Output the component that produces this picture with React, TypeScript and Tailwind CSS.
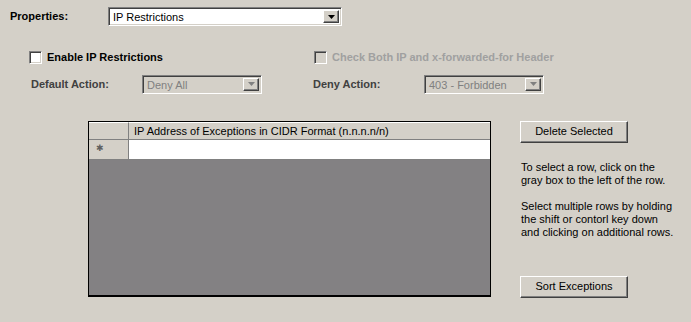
import type { JSX } from "react";

const sunken =
  "border border-t-[#808080] border-l-[#808080] border-b-white border-r-white shadow-[inset_1px_1px_0_#404040,inset_-1px_-1px_0_#d4d0c8]";
const raised =
  "border border-t-white border-l-white border-b-[#404040] border-r-[#404040] shadow-[inset_-1px_-1px_0_#808080]";

function Arrow({ disabled }: { disabled?: boolean }): JSX.Element {
  return (
    <div className={`w-[16px] h-full bg-[#d4d0c8] flex items-center justify-center ${raised}`}>
      <svg width="7" height="4" viewBox="0 0 7 4">
        <path d="M0 0h7L3.5 4z" fill={disabled ? "#808080" : "#000"} />
      </svg>
    </div>
  );
}

function Select({ value, width, disabled }: { value: string; width: string; disabled?: boolean }): JSX.Element {
  return (
    <div className={`${width} h-[19px] flex items-stretch p-[2px] ${sunken} ${disabled ? "bg-[#d4d0c8]" : "bg-white"}`}>
      <div className={`flex-1 pl-[2px] text-[11px] leading-[15px] ${disabled ? "text-[#808080]" : "text-black"}`}>{value}</div>
      <Arrow disabled={disabled} />
    </div>
  );
}

function Checkbox({ label, disabled }: { label: string; disabled?: boolean }): JSX.Element {
  return (
    <div className="flex items-center gap-[5px]">
      <div className={`w-[13px] h-[13px] ${sunken} ${disabled ? "bg-[#d4d0c8]" : "bg-white"}`} />
      <span className={`text-[11px] font-bold ${disabled ? "text-[#a0a0a0]" : "text-black"}`}>{label}</span>
    </div>
  );
}

function Button({ label }: { label: string }): JSX.Element {
  return (
    <div className={`w-[108px] h-[22px] bg-[#d4d0c8] flex items-center justify-center text-[11px] text-black ${raised}`}>
      {label}
    </div>
  );
}

function App(): JSX.Element {
  return (
    <div className="w-[691px] h-[322px] bg-[#d4d0c8] overflow-hidden font-['Liberation_Sans',Arial,sans-serif] text-black">
      <div className="flex items-center pt-[7px]">
        <span className="w-[108px] pl-[10px] text-[11px] font-bold">Properties:</span>
        <Select value="IP Restrictions" width="w-[234px]" />
      </div>

      <div className="flex mt-[23px]">
        <div className="w-[314px] pl-[29px]">
          <Checkbox label="Enable IP Restrictions" />
        </div>
        <Checkbox label="Check Both IP and x-forwarded-for Header" disabled />
      </div>

      <div className="flex items-center mt-[9px]">
        <span className="w-[142px] pl-[31px] text-[11px] font-bold text-[#404040]">Default Action:</span>
        <Select value="Deny All" width="w-[120px]" disabled />
        <span className="w-[111px] ml-[51px] text-[11px] font-bold text-[#404040]">Deny Action:</span>
        <Select value="403 - Forbidden" width="w-[120px]" disabled />
      </div>

      <div className="flex mt-[27px] pl-[88px]">
        <div className="w-[403px] h-[176px] border border-black border-b-2 bg-[#838183] flex flex-col">
          <div className="flex h-[18px] bg-[#d4d0c8] border-b border-[#808080]">
            <div className="w-[40px] border-r border-[#808080] border-t border-t-white" />
            <div className="flex-1 pl-[5px] text-[11px] leading-[17px] border-t border-t-white">
              IP Address of Exceptions in CIDR Format (n.n.n.n/n)
            </div>
          </div>
          <div className="flex h-[20px] bg-white border-b border-[#808080]">
            <div className="w-[40px] bg-[#d4d0c8] border-r border-[#808080] flex items-center pl-[7px]">
              <span className="text-[9px] text-[#606060]">✱</span>
            </div>
            <div className="flex-1" />
          </div>
        </div>

        <div className="ml-[29px] flex flex-col">
          <Button label="Delete Selected" />
          <p className="mt-[18px] pl-[1px] text-[11px] leading-[13px]">
            To select a row, click on the<br />gray box to the left of the row.
          </p>
          <p className="mt-[13px] pl-[1px] text-[11px] leading-[13px]">
            Select multiple rows by holding<br />the shift or contorl key down<br />and clicking on additional rows.
          </p>
          <div className="mt-[37px]">
            <Button label="Sort Exceptions" />
          </div>
        </div>
      </div>
    </div>
  );
}

export default App;
